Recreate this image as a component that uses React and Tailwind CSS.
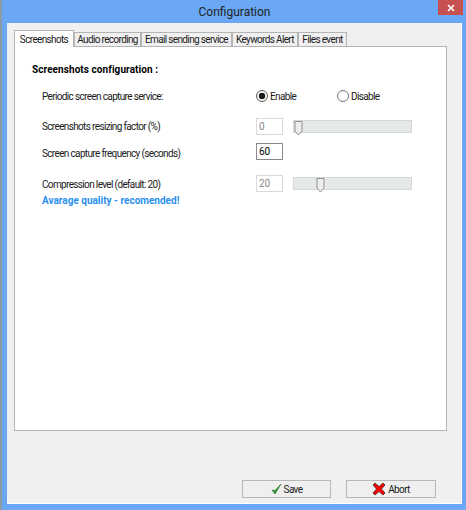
import React from "react";

const tabs = ["Audio recording", "Email sending service", "Keywords Alert", "Files event"];
const tabWidths = ["w-[67px]", "w-[91px]", "w-[66px]", "w-[49px]"];

function Slider({ thumb }) {
  return (
    <div className="ml-[10px] flex h-[13px] w-[119px] border border-[#d4d8d8] bg-[#e6e9e9]">
      <div className={thumb} />
      <svg width="9" height="15" viewBox="0 0 9 15" className="shrink-0">
        <path d="M1 .5H8V10L4.5 14 1 10Z" fill="#eeeeee" stroke="#8e8e8e" />
      </svg>
    </div>
  );
}

function Field({ value, active }) {
  return (
    <div
      className={`flex w-[27px] items-center pl-[2px] text-[10px] tracking-normal ${
        active ? "h-[17px] border border-[#8a8a8a] text-black" : "h-[17px] border border-[#d9d9d9] text-[#8a8a8a]"
      }`}
    >
      {value}
    </div>
  );
}

export default function App() {
  return (
    <div className="flex h-[510px] w-[466px] flex-col border-l-2 border-[#8c9aa8] bg-[#6aa8f5] pl-[5px] pr-[4px] font-['Roboto',sans-serif] text-[10px] tracking-[-0.65px] text-[#1a1a1a]">
      <div className="relative flex h-[23px] shrink-0 items-center justify-center text-[12px] tracking-normal text-[#222]">
        Configuration
        <div className="absolute right-[-1px] top-0 flex h-[15px] w-[25px] items-center justify-center bg-[#c75050]">
          <svg width="8" height="8" viewBox="0 0 8 8">
            <path d="M1 1L7 7M7 1L1 7" stroke="#fff" strokeWidth="1.6" />
          </svg>
        </div>
      </div>
      <div className="mb-[6px] flex flex-1 flex-col border-b border-r border-white bg-[#f0f0f0] pl-[7px] pr-[14px]">
        <div className="mt-[7px] flex h-[16px] items-end whitespace-nowrap">
          <div className="z-10 mb-[-1px] flex h-[17px] w-[60px] items-center justify-center border border-b-0 border-[#b4b4b4] bg-white">
            Screenshots
          </div>
          {tabs.map((t, i) => (
            <div
              key={t}
              className={`flex h-[14px] items-center justify-center border border-b-0 border-[#b4b4b4] bg-[#f0f0f0] ${tabWidths[i]}`}
            >
              {t}
            </div>
          ))}
        </div>
        <div className="h-[385px] border border-[#b4b4b4] bg-white pl-[17px] pr-[34px] pt-[15px]">
          <div className="flex h-[14px] items-center text-[10px] font-bold tracking-[0.07px] text-black">
            Screenshots configuration :
          </div>
          <div className="ml-[10px] mt-[13px] flex h-[14px] items-center">
            <div className="w-[214px]">Periodic screen capture service:</div>
            <div className="flex w-[81px] items-center gap-[2px]">
              <svg width="12" height="12" viewBox="0 0 12 12" className="mb-[1px]">
                <circle cx="6" cy="6" r="5.5" fill="#fff" stroke="#555" />
                <circle cx="6" cy="6" r="3.2" fill="#1a1a1a" />
              </svg>
              Enable
            </div>
            <div className="flex items-center gap-[2px]">
              <svg width="12" height="12" viewBox="0 0 12 12" className="mb-[1px]">
                <circle cx="6" cy="6" r="5.5" fill="#fff" stroke="#777" />
              </svg>
              Disable
            </div>
          </div>
          <div className="ml-[10px] mt-[15px] flex h-[17px] items-center">
            <div className="w-[214px]">Screenshots resizing factor (%)</div>
            <Field value="0" />
            <Slider thumb="w-0" />
          </div>
          <div className="ml-[10px] mt-[8px] flex h-[17px] items-center">
            <div className="w-[214px] pt-[3px]">Screen capture frequency (seconds)</div>
            <Field value="60" active />
          </div>
          <div className="ml-[10px] mt-[15px] flex h-[17px] items-center">
            <div className="w-[214px] pt-[1px]">Compression level (default: 20)</div>
            <Field value="20" />
            <Slider thumb="w-[22px]" />
          </div>
          <div className="ml-[10px] mt-[1px] flex h-[14px] items-center text-[10px] font-bold tracking-normal text-[#2a8fef]">
            Avarage quality - recomended!
          </div>
        </div>
        <div className="ml-[228px] mt-[49px] flex gap-[15px]">
          <button className="flex h-[18px] w-[89px] items-center justify-center gap-[2px] border border-[#b8b8b8] bg-[#efefef]">
            <svg width="11" height="12" viewBox="0 0 11 12">
              <path d="M1 7L4 11 10 1 4 7.5Z" fill="#2f9a2f" stroke="#1c701c" strokeWidth=".6" />
            </svg>
            Save
          </button>
          <button className="flex h-[18px] w-[90px] items-center justify-center gap-[2px] border border-[#b8b8b8] bg-[#efefef]">
            <svg width="14" height="14" viewBox="0 0 14 14">
              <path d="M3 1L7 4.5 11 1 13 3 9.5 7 13 11 11 13 7 9.5 3 13 1 11 4.5 7 1 3Z" fill="#f00" stroke="#222" strokeWidth=".7" />
            </svg>
            Abort
          </button>
        </div>
      </div>
    </div>
  );
}
